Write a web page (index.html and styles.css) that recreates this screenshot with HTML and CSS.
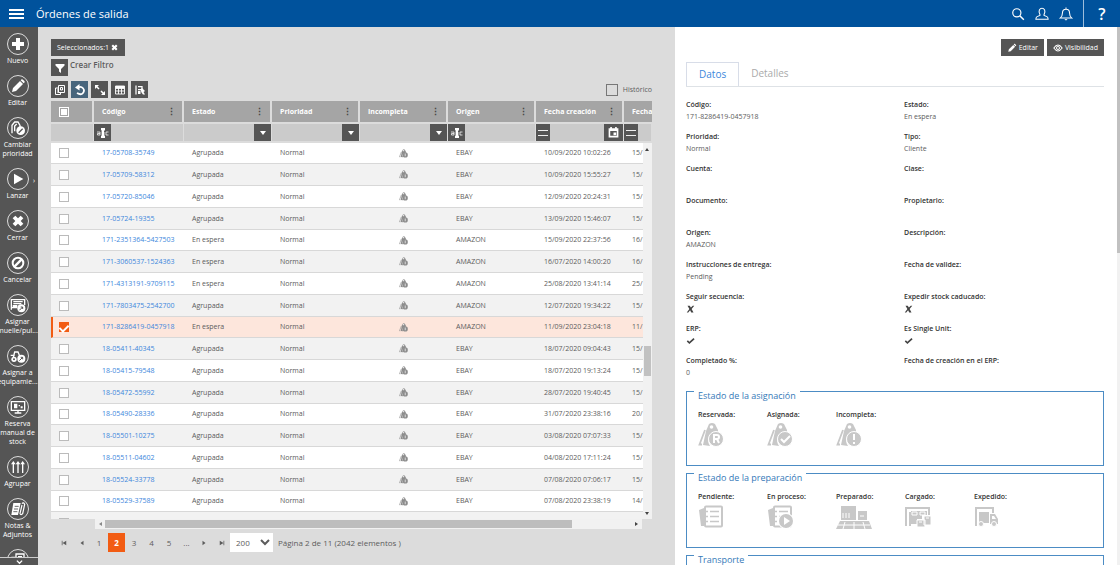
FILE: index.html
```html
<!DOCTYPE html>
<html lang="es">
<head>
  <meta charset="UTF-8">
  <meta name="viewport" content="width=device-width, initial-scale=1.0">
  <title>Órdenes de salida</title>
  <link rel="stylesheet" href="styles.css">
</head>
<body>
  <!-- shared icons -->
  <svg class="sprite" aria-hidden="true">
    <symbol id="i-plus" viewBox="0 0 24 24"><path d="M9 3h6v6h6v6h-6v6H9v-6H3V9h6z"/></symbol>
    <symbol id="i-pencil" viewBox="0 0 24 24"><path d="M3 21l1.500-6L15 4.500 19.500 9 9 19.500zM16 3.500l1.500-1.500q1-.5 2 .5l2 2q1 1 .5 2L20.500 8z"/></symbol>
    <symbol id="i-close" viewBox="0 0 24 24"><path d="M4 8L8 4l4 4 4-4 4 4-4 4 4 4-4 4-4-4-4 4-4-4 4-4z"/></symbol>
    <symbol id="i-play" viewBox="0 0 24 24"><path d="M6 4l14 8-14 8z"/></symbol>
    <symbol id="i-ban" viewBox="0 0 24 24"><circle cx="12" cy="12" r="8" fill="none" stroke="currentColor" stroke-width="3"/><path d="M7 17L17 7" stroke="currentColor" stroke-width="3.500"/></symbol>
    <symbol id="i-priority" viewBox="0 0 24 24"><path d="M3 20V8l4-5h5l3 5v3M7 17V9l3-3" fill="none" stroke="currentColor" stroke-width="2"/><circle cx="16" cy="16" r="6.500"/><path d="M13 19l6-6" stroke="#555" stroke-width="2"/></symbol>
    <symbol id="i-dock" viewBox="0 0 24 24"><path d="M2 19V4h20v8M5 7h14M5 10h12M2 16h9" fill="none" stroke="currentColor" stroke-width="2"/><path d="M4 12h7v3H4z"/><circle cx="17" cy="17" r="6"/><path d="M14 20l5-5m-3 0h3v3" fill="none" stroke="#555" stroke-width="1.500"/></symbol>
    <symbol id="i-truck" viewBox="0 0 24 24"><path d="M5 14l2-8h5l3 7M1 11h6" fill="none" stroke="currentColor" stroke-width="2"/><circle cx="6" cy="17" r="4"/><circle cx="17" cy="16" r="6"/><circle cx="6" cy="17" r="1.500" fill="#555"/><path d="M14 19l5-5m-3 0h3v3" fill="none" stroke="#555" stroke-width="1.500"/></symbol>
    <symbol id="i-screen" viewBox="0 0 24 24"><path d="M2 4h20v13H2zM7 21h10M12 17v4" fill="none" stroke="currentColor" stroke-width="2"/><path d="M6 7h5v7H6zm7 2h2v2h-2zm3 2h3v3h-3z"/></symbol>
    <symbol id="i-arrows" viewBox="0 0 24 24"><path d="M5 21V6M12 21V6M19 21V6" stroke="currentColor" stroke-width="2"/><path d="M1.500 8L5 3l3.500 5zM8.500 8L12 3l3.500 5zM15.500 8L19 3l3.500 5z"/></symbol>
    <symbol id="i-notes" viewBox="0 0 24 24"><path d="M5 3h11l-4 18H2z"/><path d="M7 8h6M6 12h6M5 16h6" stroke="#555" stroke-width="1.300"/><path d="M18 6l-3 13q1 3 4 0l3-14q-2-4-4-1" fill="none" stroke="currentColor" stroke-width="1.800"/></symbol>
    <symbol id="i-funnel" viewBox="0 0 24 24"><path d="M3 4h18v3l-7 7v8l-4-3v-5L3 7z"/></symbol>
    <symbol id="i-copy" viewBox="0 0 24 24"><path d="M9 3h12v14H9zM9 8H3v13h10v-4M6 12h4M6 16h4M13 7h4v5h-4z" fill="none" stroke="currentColor" stroke-width="2"/></symbol>
    <symbol id="i-undo" viewBox="0 0 24 24"><path d="M8 7q6-3 10 1.500t0 9.500-12 0" fill="none" stroke="currentColor" stroke-width="3.500"/><path d="M2 7l9-7v13z"/></symbol>
    <symbol id="i-expand" viewBox="0 0 24 24"><path d="M5 5l5 5M14 14l5 5" stroke="currentColor" stroke-width="3"/><path d="M2 2h8l-8 8zM22 22h-8l8-8z"/></symbol>
    <symbol id="i-columns" viewBox="0 0 24 24"><path d="M3 4h18v16H3zM9 4v16M15 4v16M3 9h18M3 14h18" fill="none" stroke="currentColor" stroke-width="1.800"/><path d="M3 4h18v4H3z"/></symbol>
    <symbol id="i-group" viewBox="0 0 24 24"><path d="M4 3v18M8 5h8v6H8" fill="none" stroke="currentColor" stroke-width="2.500"/><path d="M8 14h5v6H8zM13 11l3-3 6 6-3 2 3 5h-4l-3-4z"/></symbol>
    <symbol id="i-abc" viewBox="0 0 24 24"><path d="M8 2h8v5h-2v10h2v5H8v-5h2V7H8z"/><path d="M0 10h6v6H1v-3h5M23 10h-5v6h5M10 8v8h4v-6h-4" fill="none" stroke="currentColor" stroke-width="1.500"/></symbol>
    <symbol id="i-calendar" viewBox="0 0 24 24"><path d="M3 4h3V2h3v2h6V2h3v2h3v17H3zM6 9v9h12V9z" fill-rule="evenodd"/><path d="M12 12h5v5h-5z"/></symbol>
    <symbol id="i-search" viewBox="0 0 24 24"><circle cx="10" cy="10" r="7" fill="none" stroke="currentColor" stroke-width="2"/><path d="M15 15l7 7" stroke="currentColor" stroke-width="2.500"/></symbol>
    <symbol id="i-user" viewBox="0 0 24 24"><path d="M8.500 13Q6 8 7.500 5 9 2 12 2t4.500 3Q18 8 15.500 13v1.500l5 2q2 1 2 4.500h-21q0-3.500 2-4.500l5-2z" fill="none" stroke="currentColor" stroke-width="1.800"/></symbol>
    <symbol id="i-bell" viewBox="0 0 24 24"><path d="M2 19q4-3 4-9 0-6 6-6t6 6q0 6 4 9zM10 21q2 2 4 0M12 1v3" fill="none" stroke="currentColor" stroke-width="1.800"/></symbol>
    <symbol id="i-eye" viewBox="0 0 24 24"><path d="M2 12q10-14 20 0-10 14-20 0z" fill="none" stroke="currentColor" stroke-width="2.500"/><circle cx="12" cy="12" r="4" fill="none" stroke="currentColor" stroke-width="2"/><circle cx="12" cy="12" r="1.500"/></symbol>
    <symbol id="i-cross" viewBox="0 0 24 24"><path d="M4 3h6l3 5 5-5h4l-7 9 5 9h-6l-3-6-5 6H2l7-9z"/></symbol>
    <symbol id="i-check" viewBox="0 0 24 24"><path d="M2 13l3-3 4 4L20 4l3 3L9 20z"/></symbol>
    <symbol id="i-tag" viewBox="0 0 26 26"><path d="M8 9l3-7q3-2 6 0l3 6v3q-9-1-10 7 0 3 2 6l-7-1z" /><circle cx="13.500" cy="5" r="1.800" fill="#fff"/><path d="M7 8L1.500 22.500H4" fill="none" stroke="currentColor" stroke-width="1.800"/></symbol>
    <symbol id="i-list" viewBox="0 0 26 26"><path d="M1 6l5-2v18H3z"/><rect x="7" y="2.500" width="17" height="20" rx="1" fill="#fff" stroke="currentColor" stroke-width="2"/><path d="M12 7.500h9M12 12.500h9M12 17.500h9M6 7.500h4M6 12.500h4M6 17.500h4" stroke="currentColor" stroke-width="1.500"/></symbol>
  </svg>

  <header class="topbar">
    <button class="menu" aria-label="Menú"><span></span><span></span><span></span></button>
    <h1>Órdenes de salida</h1>
    <nav class="top-actions">
      <button aria-label="Buscar"><svg><use href="#i-search"/></svg></button>
      <button aria-label="Usuario"><svg><use href="#i-user"/></svg></button>
      <button aria-label="Avisos"><svg><use href="#i-bell"/></svg></button>
      <button class="help" aria-label="Ayuda">?</button>
    </nav>
  </header>

  <div class="workspace">
    <aside class="sidebar">
      <div class="tools">
        <button><span class="ring"><svg><use href="#i-plus"/></svg></span>Nuevo</button>
        <button><span class="ring"><svg><use href="#i-pencil"/></svg></span>Editar</button>
        <button><span class="ring"><svg><use href="#i-priority"/></svg></span>Cambiar<br>prioridad</button>
        <button class="has-more"><span class="ring"><svg><use href="#i-play"/></svg></span>Lanzar</button>
        <button><span class="ring"><svg><use href="#i-close"/></svg></span>Cerrar</button>
        <button><span class="ring"><svg><use href="#i-ban"/></svg></span>Cancelar</button>
        <button><span class="ring"><svg><use href="#i-dock"/></svg></span>Asignar<br>muelle/pul...</button>
        <button><span class="ring"><svg><use href="#i-truck"/></svg></span>Asignar a<br>equipamie...</button>
        <button><span class="ring"><svg><use href="#i-screen"/></svg></span>Reserva<br>manual de<br>stock</button>
        <button><span class="ring"><svg><use href="#i-arrows"/></svg></span>Agrupar</button>
        <button><span class="ring"><svg><use href="#i-notes"/></svg></span>Notas &amp;<br>Adjuntos</button>
        <button aria-label="Documentos"><span class="ring"><svg><use href="#i-copy"/></svg></span></button>
      </div>
      <button class="tools-down" aria-label="Más"><svg viewBox="0 0 8 8"><path d="M1 3l3 3 3-3" fill="none" stroke="currentColor" stroke-width="1.500"/></svg></button>
    </aside>

    <main class="list">
      <button class="chip">Seleccionados:1 <svg><use href="#i-close"/></svg></button>
      <div class="filter">
        <button class="sq" aria-label="Filtro"><svg><use href="#i-funnel"/></svg></button>
        <strong>Crear Filtro</strong>
      </div>
      <div class="toolbar">
        <button class="sq" aria-label="Copiar"><svg><use href="#i-copy"/></svg></button>
        <button class="sq active" aria-label="Recargar"><svg><use href="#i-undo"/></svg></button>
        <button class="sq" aria-label="Ampliar"><svg><use href="#i-expand"/></svg></button>
        <button class="sq" aria-label="Columnas"><svg><use href="#i-columns"/></svg></button>
        <button class="sq" aria-label="Agrupar columnas"><svg><use href="#i-group"/></svg></button>
        <label class="history"><input type="checkbox"> Histórico</label>
      </div>

      <div class="grid">
        <div class="grid-view">
          <table id="orders">
            <colgroup><col class="c-check"><col class="c-code"><col class="c-std"><col class="c-std"><col class="c-std"><col class="c-std"><col class="c-std"><col></colgroup>
            <thead>
              <tr class="titles">
                <th><input type="checkbox" class="some" aria-label="Seleccionar todo"></th>
                <th>Código<i>⋮</i></th>
                <th>Estado<i>⋮</i></th>
                <th>Prioridad<i>⋮</i></th>
                <th>Incompleta<i>⋮</i></th>
                <th>Origen<i>⋮</i></th>
                <th>Fecha creación<i>⋮</i></th>
                <th>Fecha</th>
              </tr>
              <tr class="filters">
                <td></td>
                <td><button aria-label="Texto"><svg><use href="#i-abc"/></svg></button></td>
                <td><button class="end drop" aria-label="Opciones"></button></td>
                <td><button class="end drop" aria-label="Opciones"></button></td>
                <td><button class="end drop" aria-label="Opciones"></button></td>
                <td><button aria-label="Texto"><svg><use href="#i-abc"/></svg></button></td>
                <td><button class="eq" aria-label="Igual"></button><button class="end cal" aria-label="Calendario"><svg><use href="#i-calendar"/></svg></button></td>
                <td><button class="eq" aria-label="Igual"></button></td>
              </tr>
            </thead>
            <tbody></tbody>
          </table>
          <div class="vscroll"><span class="up"></span><span class="thumb"></span><span class="down"></span></div>
        </div>
        <div class="hscroll"><span class="left"></span><span class="thumb"></span><span class="right"></span></div>
      </div>

      <div class="pager">
        <button aria-label="Primera"><svg viewBox="0 0 8 8"><path d="M1 1h1v6H1zM7 1v6L2 4z"/></svg></button>
        <button aria-label="Anterior"><svg viewBox="0 0 8 8"><path d="M6 1v6L2 4z"/></svg></button>
        <button>1</button>
        <button class="current">2</button>
        <button>3</button>
        <button>4</button>
        <button>5</button>
        <button>...</button>
        <button aria-label="Siguiente"><svg viewBox="0 0 8 8"><path d="M2 1l4 3-4 3z"/></svg></button>
        <button aria-label="Última"><svg viewBox="0 0 8 8"><path d="M1 1l5 3-5 3zM6 1h1v6H6z"/></svg></button>
        <select aria-label="Elementos por página"><option>200</option><option>500</option></select>
        <span>Página 2 de 11 (2042 elementos )</span>
      </div>
    </main>

    <section class="detail">
      <div class="actions">
        <button><svg><use href="#i-pencil"/></svg>Editar</button>
        <button><svg><use href="#i-eye"/></svg>Visibilidad</button>
      </div>
      <nav class="tabs"><a href="#datos" class="on">Datos</a><a href="#detalles">Detalles</a></nav>

      <dl class="fields" id="datos">
        <div><dt>Código:</dt><dd>171-8286419-0457918</dd></div>
        <div><dt>Estado:</dt><dd>En espera</dd></div>
        <div><dt>Prioridad:</dt><dd>Normal</dd></div>
        <div><dt>Tipo:</dt><dd>Cliente</dd></div>
        <div><dt>Cuenta:</dt><dd></dd></div>
        <div><dt>Clase:</dt><dd></dd></div>
        <div><dt>Documento:</dt><dd></dd></div>
        <div><dt>Propietario:</dt><dd></dd></div>
        <div><dt>Origen:</dt><dd>AMAZON</dd></div>
        <div><dt>Descripción:</dt><dd></dd></div>
        <div><dt>Instrucciones de entrega:</dt><dd>Pending</dd></div>
        <div><dt>Fecha de validez:</dt><dd></dd></div>
        <div><dt>Seguir secuencia:</dt><dd><svg><use href="#i-cross"/></svg></dd></div>
        <div><dt>Expedir stock caducado:</dt><dd><svg><use href="#i-cross"/></svg></dd></div>
        <div><dt>ERP:</dt><dd><svg><use href="#i-check"/></svg></dd></div>
        <div><dt>Es Single Unit:</dt><dd><svg><use href="#i-check"/></svg></dd></div>
        <div><dt>Completado %:</dt><dd>0</dd></div>
        <div><dt>Fecha de creación en el ERP:</dt><dd></dd></div>
      </dl>

      <fieldset>
        <legend>Estado de la asignación</legend>
        <div class="states">
          <div>Reservada:<svg viewBox="0 0 26 26"><use href="#i-tag"/><circle cx="18" cy="17" r="7.500" stroke="#fff"/><path d="M16 21v-8h3q2 0 2 2t-2 2h-3m3 0l2 4" fill="none" stroke="#fff" stroke-width="2"/></svg></div>
          <div>Asignada:<svg viewBox="0 0 26 26"><use href="#i-tag"/><circle cx="18" cy="17" r="7.500" stroke="#fff"/><path d="M14 17l3 3 6-6" fill="none" stroke="#fff" stroke-width="2"/></svg></div>
          <div>Incompleta:<svg viewBox="0 0 26 26"><use href="#i-tag"/><circle cx="18" cy="17" r="7.500" stroke="#fff"/><path d="M18 12v6M18 20v2" stroke="#fff" stroke-width="2"/></svg></div>
        </div>
      </fieldset>
      <fieldset>
        <legend>Estado de la preparación</legend>
        <div class="states">
          <div>Pendiente:<svg viewBox="0 0 26 26"><use href="#i-list"/></svg></div>
          <div>En proceso:<svg viewBox="0 0 26 26"><use href="#i-list"/><circle cx="19" cy="17" r="8" fill="#fff"/><circle cx="19" cy="17" r="7"/><path d="M17 13l6 4-6 4z" fill="#fff"/></svg></div>
          <div>Preparado:<svg class="wide" viewBox="0 0 36 26"><path d="M5 2h15v14H5zM22 7h9v9h-9zM4 17h29l3 8H0z"/><path d="M7 9v5M10 9v5M13 9v5M24 12h4M2 21h32M9 18l-2 7M18 18v7M27 18l2 7" stroke="#fff" stroke-width="1"/></svg></div>
          <div>Cargado:<svg viewBox="0 0 26 26"><path d="M1 22V4h23v7M5 22V8" fill="none" stroke="currentColor" stroke-width="2"/><path d="M6 7h16v4h-5v4h-5v5H6z"/><path d="M7 8h5v3H7zM15 8h5v3h-5z" fill="none" stroke="#fff"/><path d="M19 12h7v9h-7zM12 16h8v7h-8z" stroke="#fff"/><path d="M14 18h3M21 14h3" stroke="#fff"/></svg></div>
          <div>Expedido:<svg viewBox="0 0 26 26"><path d="M2 22V4h17v5" fill="none" stroke="currentColor" stroke-width="2"/><path d="M5 8h10v11H5zM16 10h5l3 5v5h-8z"/><path d="M18 12h2l2 3h-4z" fill="#fff"/><circle cx="7" cy="20" r="2.500" stroke="#fff"/><circle cx="20" cy="20" r="2.500" stroke="#fff"/></svg></div>
        </div>
      </fieldset>
      <fieldset>
        <legend>Transporte</legend>
        <div class="states"></div>
      </fieldset>
      <div class="page-scroll"></div>
    </section>
  </div>

  <script>
    const orders = [
      ['17-05708-35749', 'Agrupada', 'EBAY', '10/09/2020 10:02:26', '15/'],
      ['17-05709-58312', 'Agrupada', 'EBAY', '10/09/2020 15:55:27', '15/'],
      ['17-05720-85046', 'Agrupada', 'EBAY', '12/09/2020 20:24:31', '15/'],
      ['17-05724-19355', 'Agrupada', 'EBAY', '13/09/2020 15:46:07', '15/'],
      ['171-2351364-5427503', 'En espera', 'AMAZON', '15/09/2020 22:37:56', '16/'],
      ['171-3060537-1524363', 'En espera', 'AMAZON', '16/07/2020 14:00:20', '16/'],
      ['171-4313191-9709115', 'En espera', 'AMAZON', '25/08/2020 13:41:14', '25/'],
      ['171-7803475-2542700', 'Agrupada', 'AMAZON', '12/07/2020 19:34:22', '15/'],
      ['171-8286419-0457918', 'En espera', 'AMAZON', '11/09/2020 23:04:18', '11/'],
      ['18-05411-40345', 'Agrupada', 'EBAY', '18/07/2020 09:04:43', '15/'],
      ['18-05415-79548', 'Agrupada', 'EBAY', '18/07/2020 19:13:24', '15/'],
      ['18-05472-55992', 'Agrupada', 'EBAY', '28/07/2020 19:40:45', '15/'],
      ['18-05490-28336', 'Agrupada', 'EBAY', '31/07/2020 23:38:16', '20/'],
      ['18-05501-10275', 'Agrupada', 'EBAY', '03/08/2020 07:07:33', '15/'],
      ['18-05511-04602', 'Agrupada', 'EBAY', '04/08/2020 17:11:24', '15/'],
      ['18-05524-33778', 'Agrupada', 'EBAY', '07/08/2020 07:06:17', '15/'],
      ['18-05529-37589', 'Agrupada', 'EBAY', '07/08/2020 23:38:19', '14/'],
      ['', '', '', '', '']
    ];
    const selected = '171-8286419-0457918';

    document.querySelector('#orders tbody').innerHTML = orders.map(([code, state, origin, created, next]) => `
      <tr class="${code === selected ? 'selected' : ''}">
        <td><input type="checkbox" aria-label="Seleccionar ${code}" ${code === selected ? 'checked' : ''}></td>
        <td><a href="#">${code}</a></td>
        <td>${state}</td>
        <td>${code ? 'Normal' : ''}</td>
        <td class="lock">${code ? '<svg viewBox="0 0 26 26"><use href="#i-tag"/><circle cx="18" cy="17" r="7.5"/><path d="M18 13v8" stroke="#fff" stroke-width="2"/></svg>' : ''}</td>
        <td>${origin}</td>
        <td>${created}</td>
        <td>${next}</td>
      </tr>`).join('');
  </script>
</body>
</html>
```
FILE: styles.css
```css
:root {
  --blue: #00529c;
  --dark: #555555;
  --panel: #dcdcdc;
  --head: #a5a5a5;
  --orange: #f25c13;
  --link: #3c87dc;
}
* {
  box-sizing: border-box;
}
body {
  margin: 0;
  font-family: "Open Sans", "Noto Sans", sans-serif;
  font-size: 7px;
  line-height: 12px;
  color: #5c5c5c;
  height: 100vh;
  display: flex;
  flex-direction: column;
  overflow: hidden;
}
button, select, input {
  font: inherit;
  color: inherit;
  border: none;
  margin: 0;
  padding: 0;
}
button {
  background: none;
  cursor: pointer;
}
svg {
  fill: currentColor;
  display: block;
}
.sprite {
  position: absolute;
  width: 0;
  height: 0;
}

/* top bar */
.topbar {
  height: 27px;
  flex: none;
  display: flex;
  align-items: center;
  background: var(--blue);
  color: #fff;
  padding-left: 9px;
}
.menu {
  width: 15px;
  display: grid;
  gap: 2px;
}
.menu span {
  height: 2px;
  background: #fff;
}
h1 {
  margin: 0 0 0 12px;
  font-size: 11px;
  font-weight: normal;
}
.top-actions {
  margin-left: auto;
  display: flex;
  align-self: stretch;
}
.top-actions button {
  width: 24px;
  display: grid;
  place-items: center;
}
.top-actions svg {
  width: 14px;
  height: 14px;
}
.top-actions .help {
  width: 37px;
  margin-left: 5px;
  border-left: 1px solid #9dbddb;
  font-size: 16px;
  font-weight: 600;
}

.workspace {
  flex: 1;
  min-height: 0;
  display: grid;
  grid-template-columns: 38px minmax(0, 637fr) minmax(0, 445fr);
}

/* sidebar */
.sidebar {
  background: var(--dark);
  color: #fff;
  display: flex;
  flex-direction: column;
  min-height: 0;
}
.tools {
  flex: 1;
  min-height: 0;
  overflow: hidden;
  padding: 6px 3px 0 0;
}
.tools button {
  display: flex;
  flex-direction: column;
  align-items: center;
  position: relative;
  width: 35px;
  margin-bottom: 10px;
  line-height: 9px;
  white-space: nowrap;
}
.ring {
  width: 22px;
  height: 22px;
  margin-bottom: 1px;
  flex: none;
  border: 1px solid #ddd;
  border-radius: 50%;
  display: grid;
  place-items: center;
}
.ring svg {
  width: 16px;
  height: 16px;
}
.has-more::after {
  content: "›";
  position: absolute;
  right: 0;
  top: 8px;
}
.tools-down {
  height: 8px;
  border-top: 1px solid #ccc;
  display: grid;
  place-items: center;
  background: var(--dark);
}
.tools-down svg {
  width: 7px;
  height: 7px;
}

/* list */
.list {
  background: var(--panel);
  padding: 12px 23px 13px 13px;
  display: flex;
  flex-direction: column;
  min-height: 0;
}
.chip {
  align-self: flex-start;
  height: 17px;
  padding: 0 6px;
  background: var(--dark);
  color: #fff;
  display: flex;
  align-items: center;
  gap: 1px;
}
.chip svg {
  width: 9px;
  height: 9px;
}
.filter {
  display: flex;
  gap: 2px;
  margin-top: 3px;
}
.filter strong {
  font-size: 8px;
  font-weight: 600;
}
.sq {
  width: 17px;
  height: 17px;
  background: var(--dark);
  color: #fff;
  display: grid;
  place-items: center;
}
.sq.active {
  background: #47657c;
}
.sq svg {
  width: 12px;
  height: 12px;
}
.toolbar {
  display: flex;
  gap: 3px;
  margin: 5px 0 3px;
}
.history {
  margin-left: auto;
  display: flex;
  align-items: center;
  gap: 5px;
}
.history input {
  appearance: none;
  width: 12px;
  height: 12px;
  border: 1px solid #777;
}

.grid {
  flex: 1;
  min-height: 0;
  display: flex;
  flex-direction: column;
}
.grid-view {
  flex: 1;
  min-height: 0;
  overflow: hidden;
  position: relative;
}
table {
  width: 100%;
  table-layout: fixed;
  border-collapse: separate;
  border-spacing: 0;
}
.c-check {
  width: 43px;
}
.c-code {
  width: 90px;
}
.c-std {
  width: 88px;
}
th, td {
  padding: 0 0 0 8px;
  text-align: left;
  white-space: nowrap;
  overflow: hidden;
}
th:first-child, td:first-child {
  padding-left: 8px;
}
.titles th {
  height: 21px;
  background: var(--head);
  color: #fff;
  border-right: 2px solid var(--panel);
}
.titles th:last-child {
  border-right: none;
}
.titles i {
  float: right;
  margin-right: 6px;
  font-style: normal;
  font-size: 9px;
  color: #444;
}
.filters td {
  height: 21px;
  padding: 0;
  background: #cbcbcb;
  border-right: 1px solid var(--panel);
  border-top: 2px solid var(--panel);
  border-bottom: 2px solid var(--panel);
}
.filters button {
  float: left;
  width: 17px;
  height: 17px;
  background: var(--dark);
  color: #fff;
  display: grid;
  place-items: center;
}
.filters svg {
  width: 12px;
  height: 12px;
}
.filters .end {
  float: right;
}
.filters .cal {
  width: 19px;
}
.filters .cal svg {
  width: 13px;
  height: 13px;
}
.filters .eq {
  width: 14px;
}
.eq::after {
  content: "";
  width: 10px;
  height: 4px;
  border: solid #eee;
  border-width: 1px 0;
}
.drop::after {
  content: "";
  border: 3px solid transparent;
  border-top: 4px solid #fff;
  border-bottom: none;
}
tbody td {
  height: 22px;
  background: #fff;
  border-bottom: 1px solid #d8d8d8;
}
tbody tr:nth-child(4n+1) td {
  height: 21px;
}
tbody tr:nth-child(even) td {
  background: #f2f2f2;
}
tbody tr.selected td {
  background: #fde6dc;
}
tbody tr.selected td:first-child {
  border-left: 2px solid var(--orange);
  padding-left: 6px;
}
a {
  color: var(--link);
  text-decoration: none;
}
table input {
  appearance: none;
  display: block;
  width: 10px;
  height: 10px;
  border: 1px solid #bbb;
  background: #fff;
}
table input:checked {
  background: var(--orange);
  border-color: var(--orange);
}
table input:checked::after {
  content: "";
  display: block;
  width: 4px;
  height: 7px;
  margin: 0 auto;
  border: solid #fff;
  border-width: 0 2px 2px 0;
  transform: rotate(45deg);
}
table .some {
  border-color: #fff;
  background: #fff;
  box-shadow: inset 0 0 0 1px var(--head);
}
.lock svg {
  width: 9px;
  height: 9px;
  margin-left: 31px;
  color: #8c8c8c;
}

/* scrollbars */
.vscroll {
  position: absolute;
  top: 42px;
  right: 0;
  bottom: 0;
  width: 9px;
  background: #f1f1f1;
}
.vscroll .thumb {
  position: absolute;
  top: 54%;
  width: 7px;
  left: 1px;
  height: 30px;
  background: #c1c1c1;
}
.vscroll .up, .vscroll .down, .hscroll .left, .hscroll .right {
  border: 2px solid transparent;
}
.vscroll .up, .vscroll .down {
  position: absolute;
  left: 2px;
}
.vscroll .up {
  top: 3px;
  border-bottom: 3px solid #444;
}
.vscroll .down {
  bottom: 2px;
  border-top: 3px solid #444;
}
.hscroll {
  height: 10px;
  flex: none;
  margin: 0 10px 0 44px;
  padding: 0 2px;
  background: #f1f1f1;
  display: flex;
  align-items: center;
}
.hscroll .thumb {
  width: 86%;
  height: 8px;
  margin-left: 3px;
  background: #bdbdbd;
}
.hscroll .left {
  border-right: 3px solid #888;
}
.hscroll .right {
  margin-left: auto;
  border-left: 3px solid #444;
}

/* pager */
.pager {
  display: flex;
  align-items: center;
  margin-top: 4px;
  margin-left: 4px;
  font-size: 8px;
}
.pager button {
  flex: 0 0 auto;
  width: 18px;
  height: 19px;
  display: grid;
  place-items: center;
}
.pager button:nth-of-type(even) {
  width: 17px;
}
.pager svg {
  width: 6px;
  height: 6px;
}
.pager .current {
  background: var(--orange);
  color: #fff;
  font-weight: bold;
}
.pager select {
  width: 43px;
  height: 19px;
  padding-left: 2px;
  margin-right: 5px;
  border-radius: 0;
  background: #fff;
}

/* detail panel */
.detail {
  position: relative;
  background: #fff;
  padding: 12px 16px 0 11px;
  overflow: hidden;
}
.actions {
  display: flex;
  justify-content: flex-end;
  gap: 3px;
}
.actions button {
  height: 17px;
  padding: 0 6px;
  background: var(--dark);
  color: #fff;
  display: flex;
  align-items: center;
  gap: 2px;
}
.actions svg {
  width: 10px;
  height: 10px;
}
.tabs {
  display: flex;
  margin-top: 6px;
  border-bottom: 1px solid #dee2e6;
  font-size: 10px;
}
.tabs a {
  padding: 5px 12px;
  line-height: 13px;
  color: #aaa;
}
.tabs .on {
  color: var(--link);
  border: 1px solid #d8dde8;
  border-bottom: none;
}
.fields {
  margin: 12px 0 0;
  display: grid;
  grid-template-columns: 1fr 1fr;
  column-gap: 18px;
  row-gap: 8px;
}
.fields div {
  height: 24px;
}
dt {
  font-weight: 600;
  color: #333;
}
dd {
  margin: 0;
}
dd svg {
  width: 9px;
  height: 12px;
  color: #444;
}
fieldset {
  margin: -4px 0 0;
  padding: 0 11px;
  min-width: 0;
  border: 1px solid #4c8cc4;
}
.fields + fieldset {
  margin-top: 1px;
}
legend {
  margin-left: -4px;
  padding: 10px 4px 0;
  font-size: 9px;
  line-height: 12px;
  color: #3579b8;
}
.states {
  display: flex;
  height: 63px;
  padding-top: 7px;
  font-weight: 600;
  color: #333;
}
.states div {
  width: 69px;
}
.states svg {
  width: 26px;
  height: 26px;
  margin-top: 1px;
  color: #c8c8c8;
}
.states .wide {
  width: 36px;
}
.page-scroll {
  position: absolute;
  top: 0;
  right: 0;
  bottom: 0;
  width: 3px;
  background: linear-gradient(#c1c1c1 42%, #f1f1f1 42%);
}
```
